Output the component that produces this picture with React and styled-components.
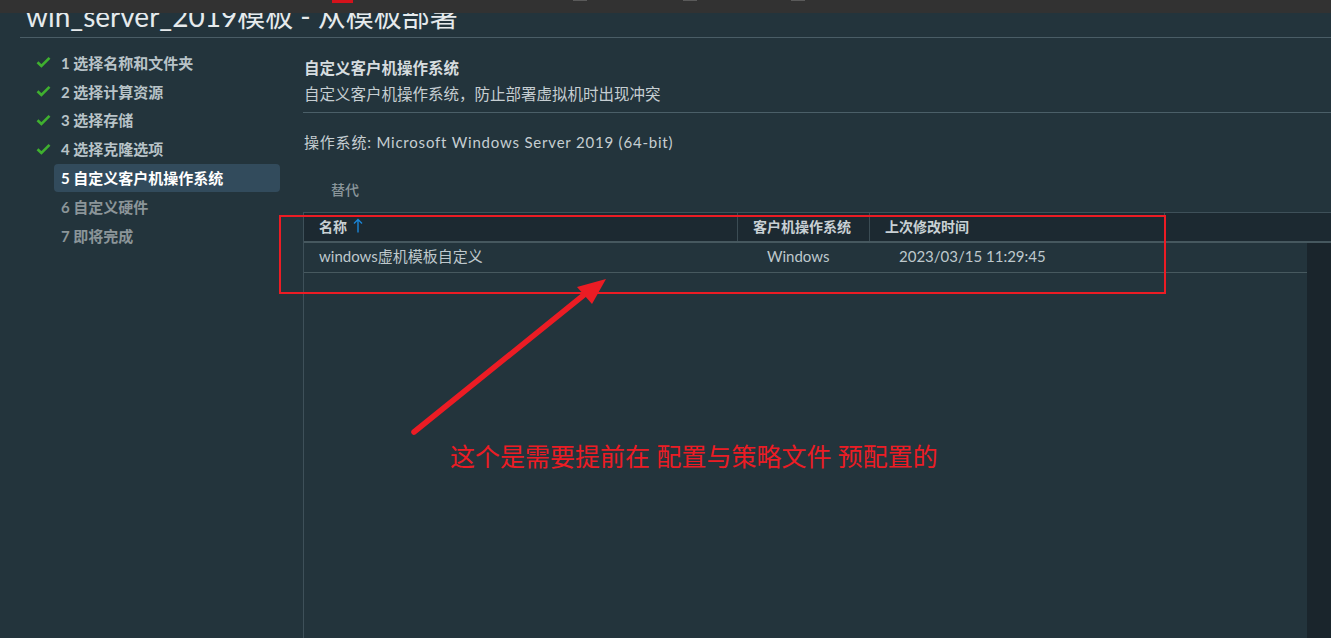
import React from "react";
import styled, { createGlobalStyle } from "styled-components";

const FONT = `Lato, "Noto Sans CJK SC", sans-serif`;

const GlobalStyle = createGlobalStyle`
  html, body {
    margin: 0;
    padding: 0;
    background: #23343c;
    overflow: hidden;
  }
  * {
    box-sizing: border-box;
  }
`;

const Page = styled.div`
  position: relative;
  width: 1331px;
  height: 638px;
  display: flex;
  flex-direction: column;
  background: #23343c;
  font-family: ${FONT};
  overflow: hidden;
`;

const TopBar = styled.div`
  position: relative;
  z-index: 2;
  height: 13px;
  flex: none;
  display: flex;
  align-items: flex-start;
  background: #323232;
`;

const BarMark = styled.span`
  display: block;
  height: ${(p) => (p.$red ? 3 : 1)}px;
  width: ${(p) => p.$w}px;
  margin-left: ${(p) => p.$ml}px;
  background: ${(p) => (p.$red ? "#d4121b" : "#5a5a5a")};
`;

const TitleRow = styled.div`
  flex: none;
  height: 25px;
  margin-left: 20px;
  padding-left: 6px;
  border-bottom: 1px solid #4a5d66;
`;

const Title = styled.h1`
  margin: -12px 0 0;
  font-size: 28px;
  line-height: 30px;
  font-weight: 400;
  color: #e6eaec;
  white-space: nowrap;
`;

const Body = styled.div`
  flex: 1;
  display: flex;
  min-height: 0;
`;

const Nav = styled.ul`
  list-style: none;
  margin: 0;
  padding: 10px 0 0 36px;
  width: 303px;
  flex: none;
`;

const NavRow = styled.li`
  display: flex;
  align-items: center;
  height: 28.8px;
`;

const CheckSlot = styled.span`
  width: 18px;
  display: flex;
  align-items: center;
`;

const NavLabel = styled.span`
  width: 226px;
  height: 28px;
  display: flex;
  align-items: center;
  padding-left: 7px;
  border-radius: 4px;
  font-size: 15px;
  font-weight: 700;
  white-space: nowrap;
  background: ${(p) => (p.$active ? "#324b5c" : "transparent")};
  color: ${(p) =>
    p.$active ? "#ffffff" : p.$done ? "#b8c3c8" : "#8b9599"};
`;

const Content = styled.div`
  flex: 1;
  display: flex;
  flex-direction: column;
  padding-top: 20px;
  min-width: 0;
`;

const Intro = styled.div`
  padding-left: 1px;
  padding-bottom: 7px;
  border-bottom: 1px solid #4b5f68;
`;

const Heading = styled.div`
  font-size: 15.5px;
  line-height: 20px;
  font-weight: 700;
  color: #d6dcdf;
`;

const SubText = styled.div`
  margin-top: 5px;
  font-size: 15.5px;
  line-height: 22px;
  color: #c6ced2;
`;

const OsLine = styled.div`
  margin-top: 18px;
  padding-left: 1px;
  font-size: 15px;
  line-height: 22px;
  letter-spacing: 0.8px;
  color: #c6ced2;
`;

const TabLabel = styled.div`
  margin-top: 27px;
  padding-left: 28px;
  font-size: 14px;
  line-height: 20px;
  font-weight: 500;
  color: #8a969b;
`;

const Table = styled.div`
  margin-top: 12px;
  flex: 1;
  display: flex;
  flex-direction: column;
  border-top: 1px solid #3e5059;
  border-left: 1px solid #3e5059;
`;

const HeadRow = styled.div`
  display: flex;
  height: 30px;
  flex: none;
  background: #1c2931;
  border-bottom: 2px solid #46585f;
`;

const HeadCell = styled.div`
  width: ${(p) => (p.$w ? `${p.$w}px` : "auto")};
  flex: ${(p) => (p.$w ? "none" : 1)};
  display: flex;
  align-items: center;
  gap: 6px;
  padding: 0 0 3px 15px;
  font-size: 14px;
  font-weight: 700;
  color: #c8d0d4;
  white-space: nowrap;
  border-right: ${(p) => (p.$last ? "none" : "1px solid #3b4c54")};
`;

const GridArea = styled.div`
  flex: 1;
  display: flex;
  min-height: 0;
`;

const Rows = styled.div`
  flex: 1;
`;

const Scroller = styled.div`
  width: 24px;
  flex: none;
  background: #1a252c;
`;

const DataRow = styled.div`
  display: flex;
  height: 30px;
  border-bottom: 1px solid #47595f;
`;

const DataCell = styled.div`
  width: ${(p) => (p.$w ? `${p.$w}px` : "auto")};
  flex: ${(p) => (p.$w ? "none" : 1)};
  display: flex;
  align-items: center;
  padding: 0 0 4px ${(p) => p.$pad}px;
  font-size: 15px;
  color: #bec8cc;
  white-space: nowrap;
`;

const MarkBox = styled.div`
  position: absolute;
  left: 279px;
  top: 215px;
  width: 887px;
  height: 79px;
  border: 2px solid #ec1c24;
  pointer-events: none;
`;

const ArrowSvg = styled.svg`
  position: absolute;
  left: 0;
  top: 0;
  pointer-events: none;
`;

const Note = styled.div`
  position: absolute;
  left: 450px;
  top: 440px;
  font-size: 25px;
  line-height: 32px;
  color: #ec1c24;
  white-space: nowrap;
`;

const CheckIcon = () => (
  <svg width="15" height="12" viewBox="0 0 15 12">
    <path
      d="M1.5 6.2 L5.4 10 L13.5 1.8"
      fill="none"
      stroke="#3fb02f"
      strokeWidth="2.6"
    />
  </svg>
);

const SortUp = () => (
  <svg width="10" height="15" viewBox="0 0 10 15">
    <path
      d="M5 14.5 V1.5 M1 5.5 L5 1.5 L9 5.5"
      fill="none"
      stroke="#1a85d8"
      strokeWidth="1.4"
    />
  </svg>
);

const steps = [
  { label: "1 选择名称和文件夹", done: true },
  { label: "2 选择计算资源", done: true },
  { label: "3 选择存储", done: true },
  { label: "4 选择克隆选项", done: true },
  { label: "5 自定义客户机操作系统", active: true },
  { label: "6 自定义硬件" },
  { label: "7 即将完成" },
];

export default function App() {
  return (
    <Page>
      <GlobalStyle />
      <TopBar>
        <BarMark $red $w={21} $ml={332} />
        <BarMark $w={14} $ml={220} />
        <BarMark $w={14} $ml={96} />
        <BarMark $w={14} $ml={94} />
      </TopBar>
      <TitleRow>
        <Title>win_server_2019模板 - 从模板部署</Title>
      </TitleRow>
      <Body>
        <Nav>
          {steps.map((s) => (
            <NavRow key={s.label}>
              <CheckSlot>{s.done && <CheckIcon />}</CheckSlot>
              <NavLabel $active={s.active} $done={s.done}>
                {s.label}
              </NavLabel>
            </NavRow>
          ))}
        </Nav>
        <Content>
          <Intro>
            <Heading>自定义客户机操作系统</Heading>
            <SubText>自定义客户机操作系统，防止部署虚拟机时出现冲突</SubText>
          </Intro>
          <OsLine>操作系统: Microsoft Windows Server 2019 (64-bit)</OsLine>
          <TabLabel>替代</TabLabel>
          <Table>
            <HeadRow>
              <HeadCell $w={434}>
                名称 <SortUp />
              </HeadCell>
              <HeadCell $w={132}>客户机操作系统</HeadCell>
              <HeadCell $w={295}>上次修改时间</HeadCell>
              <HeadCell $last />
            </HeadRow>
            <GridArea>
              <Rows>
                <DataRow>
                  <DataCell $w={434} $pad={15}>
                    windows虚机模板自定义
                  </DataCell>
                  <DataCell $w={132} $pad={29}>
                    Windows
                  </DataCell>
                  <DataCell $pad={29}>2023/03/15 11:29:45</DataCell>
                </DataRow>
              </Rows>
              <Scroller />
            </GridArea>
          </Table>
        </Content>
      </Body>
      <MarkBox />
      <ArrowSvg width="1331" height="638" viewBox="0 0 1331 638">
        <line
          x1="414"
          y1="432"
          x2="590"
          y2="290"
          stroke="#ec1c24"
          strokeWidth="5.5"
          strokeLinecap="round"
        />
        <polygon points="606,279 577,287 592,304" fill="#ec1c24" />
      </ArrowSvg>
      <Note>这个是需要提前在 配置与策略文件 预配置的</Note>
    </Page>
  );
}
